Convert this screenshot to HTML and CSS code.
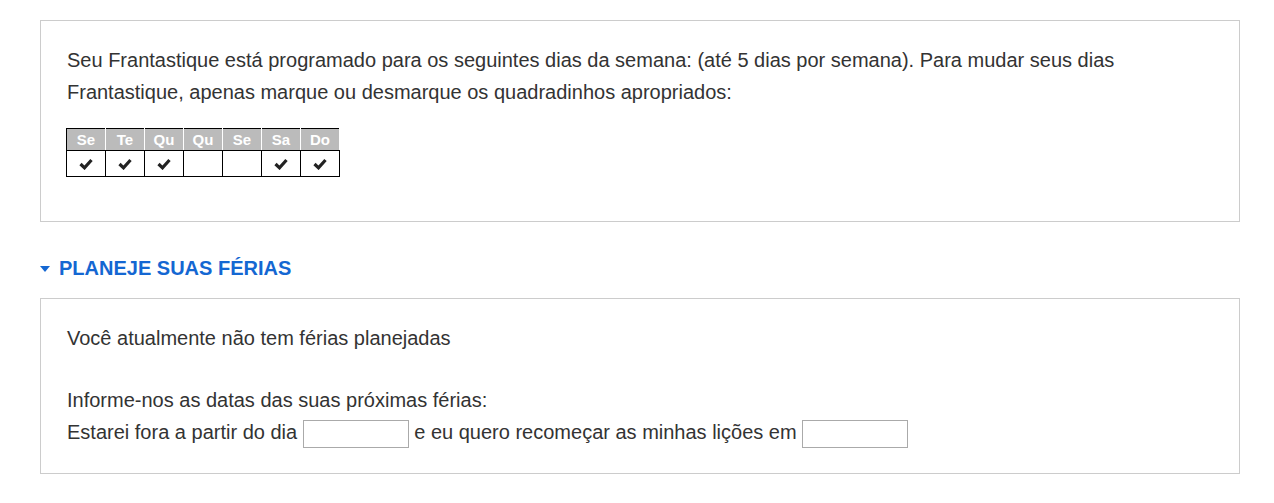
FILE: index.html
```html
<!DOCTYPE html>
<html lang="pt">
<head>
<meta charset="utf-8">
<link rel="stylesheet" href="styles.css">
</head>
<body>
<div class="page">
  <section class="box box-days">
    <p class="text">Seu Frantastique está programado para os seguintes dias da semana: (até 5 dias por semana). Para mudar seus dias Frantastique, apenas marque ou desmarque os quadradinhos apropriados:</p>
    <table class="days">
      <thead>
        <tr><th>Se</th><th>Te</th><th>Qu</th><th>Qu</th><th>Se</th><th>Sa</th><th>Do</th></tr>
      </thead>
      <tbody>
        <tr>
          <td><svg class="check" viewBox="0 0 14 12" width="14" height="12"><polyline points="1.5,6 5.5,9.8 12.5,2" /></svg></td>
          <td><svg class="check" viewBox="0 0 14 12" width="14" height="12"><polyline points="1.5,6 5.5,9.8 12.5,2" /></svg></td>
          <td><svg class="check" viewBox="0 0 14 12" width="14" height="12"><polyline points="1.5,6 5.5,9.8 12.5,2" /></svg></td>
          <td></td>
          <td></td>
          <td><svg class="check" viewBox="0 0 14 12" width="14" height="12"><polyline points="1.5,6 5.5,9.8 12.5,2" /></svg></td>
          <td><svg class="check" viewBox="0 0 14 12" width="14" height="12"><polyline points="1.5,6 5.5,9.8 12.5,2" /></svg></td>
        </tr>
      </tbody>
    </table>
  </section>

  <h2 class="section-title"><span class="caret"></span>PLANEJE SUAS FÉRIAS</h2>

  <section class="box box-vac">
    <p class="text gap">Você atualmente não tem férias planejadas</p>
    <p class="text">Informe-nos as datas das suas próximas férias:</p>
    <p class="text">Estarei fora a partir do dia <input class="date" type="text"> e eu quero recomeçar as minhas lições em <input class="date" type="text"></p>
  </section>
</div>
</body>
</html>
```

FILE: styles.css
```css
html, body {
  margin: 0;
  padding: 0;
  background: #fff;
}
body {
  font-family: "Liberation Sans", Arial, sans-serif;
  color: #333;
}
.page {
  width: 1200px;
  margin: 20px 0 0 40px;
}
.box {
  border: 1px solid #ccc;
  box-sizing: border-box;
  padding: 23px 26px 24px 26px;
}
.box-days {
  height: 202px;
}
.box-vac {
  height: 176px;
}
.text {
  margin: 0;
  font-size: 20px;
  line-height: 32px;
}
.text.gap {
  margin-bottom: 30px;
}
.days {
  border-collapse: collapse;
  margin: 20px 0 0 -1px;
}
.days th {
  width: 38px;
  height: 21px;
  padding: 0;
  background: #bbb;
  color: #fff;
  font-size: 15px;
  font-weight: bold;
  text-align: center;
  line-height: 20px;
  border-top: 1px solid #000;
  border-bottom: 1px solid #000;
  border-left: 1px solid #fff;
  border-right: 1px solid #fff;
}
.days th:first-child {
  border-left: 1px solid #000;
}
.days td {
  width: 38px;
  height: 25px;
  padding: 0;
  border: 1px solid #000;
  text-align: center;
  vertical-align: middle;
}
.check {
  display: block;
  margin: 0 auto;
}
.check polyline {
  fill: none;
  stroke: #222;
  stroke-width: 3.2;
  stroke-linecap: butt;
  stroke-linejoin: miter;
}
.section-title {
  margin: 34px 0 18px 0;
  font-size: 20px;
  line-height: 24px;
  font-weight: bold;
  color: #1467d2;
  display: flex;
  align-items: center;
}
.caret {
  width: 0;
  height: 0;
  border-left: 5px solid transparent;
  border-right: 5px solid transparent;
  border-top: 6px solid #1467d2;
  margin-right: 9px;
  margin-top: 1px;
}
.date {
  width: 106px;
  height: 28px;
  box-sizing: border-box;
  border: 1px solid #aaa;
  padding: 2px 4px;
  margin: 0;
  vertical-align: middle;
  font-family: inherit;
  font-size: 16px;
}
```
